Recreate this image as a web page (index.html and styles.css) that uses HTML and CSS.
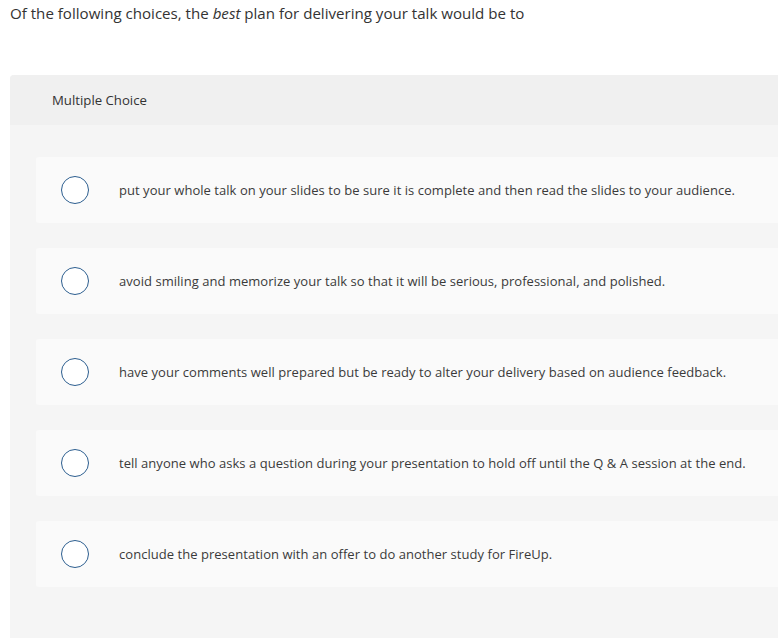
FILE: index.html
```html
<!DOCTYPE html>
<html>
<head>
<meta charset="utf-8">
<link rel="stylesheet" href="styles.css">
</head>
<body>
<p class="prompt">Of the following choices, the <em>best</em> plan for delivering your talk would be to</p>
<section class="panel">
  <div class="panel-head">Multiple Choice</div>
  <div class="choices">
    <label class="choice"><span class="radio"></span><span class="choice-text">put your whole talk on your slides to be sure it is complete and then read the slides to your audience.</span></label>
    <label class="choice"><span class="radio"></span><span class="choice-text">avoid smiling and memorize your talk so that it will be serious, professional, and polished.</span></label>
    <label class="choice"><span class="radio"></span><span class="choice-text">have your comments well prepared but be ready to alter your delivery based on audience feedback.</span></label>
    <label class="choice"><span class="radio"></span><span class="choice-text">tell anyone who asks a question during your presentation to hold off until the Q &amp; A session at the end.</span></label>
    <label class="choice"><span class="radio"></span><span class="choice-text">conclude the presentation with an offer to do another study for FireUp.</span></label>
  </div>
</section>
</body>
</html>
```
FILE: styles.css
```css
html, body {
  margin: 0;
  padding: 0;
  background: #ffffff;
  overflow: hidden;
}
body {
  font-family: "Open Sans", "Liberation Sans", sans-serif;
  color: #333333;
  width: 778px;
  height: 638px;
}
.prompt {
  margin: 0;
  padding: 4px 0 0 10px;
  font-size: 15.1px;
  line-height: 18px;
  color: #333333;
}
.prompt em {
  font-style: italic;
}
.panel {
  margin: 53px 0 0 10px;
  background: #f5f5f5;
  border-radius: 4px 0 0 0;
  height: 563px;
}
.panel-head {
  background: #f0f0f0;
  border-radius: 4px 0 0 0;
  height: 50px;
  padding-left: 42px;
  display: flex;
  align-items: center;
  font-size: 13.2px;
  color: #333333;
}
.choices {
  display: flex;
  flex-direction: column;
  gap: 25px;
  padding: 32px 0 0 26px;
}
.choice {
  display: flex;
  align-items: center;
  height: 66px;
  background: #fafafa;
  border-radius: 3px 0 0 3px;
  padding-left: 25px;
}
.radio {
  width: 26px;
  height: 26px;
  border: 1.5px solid #2c5e8f;
  border-radius: 50%;
  background: #ffffff;
  flex: none;
}
.choice-text {
  margin-left: 30px;
  font-size: 13px;
  letter-spacing: 0.04px;
  color: #3a3a3a;
}
```
